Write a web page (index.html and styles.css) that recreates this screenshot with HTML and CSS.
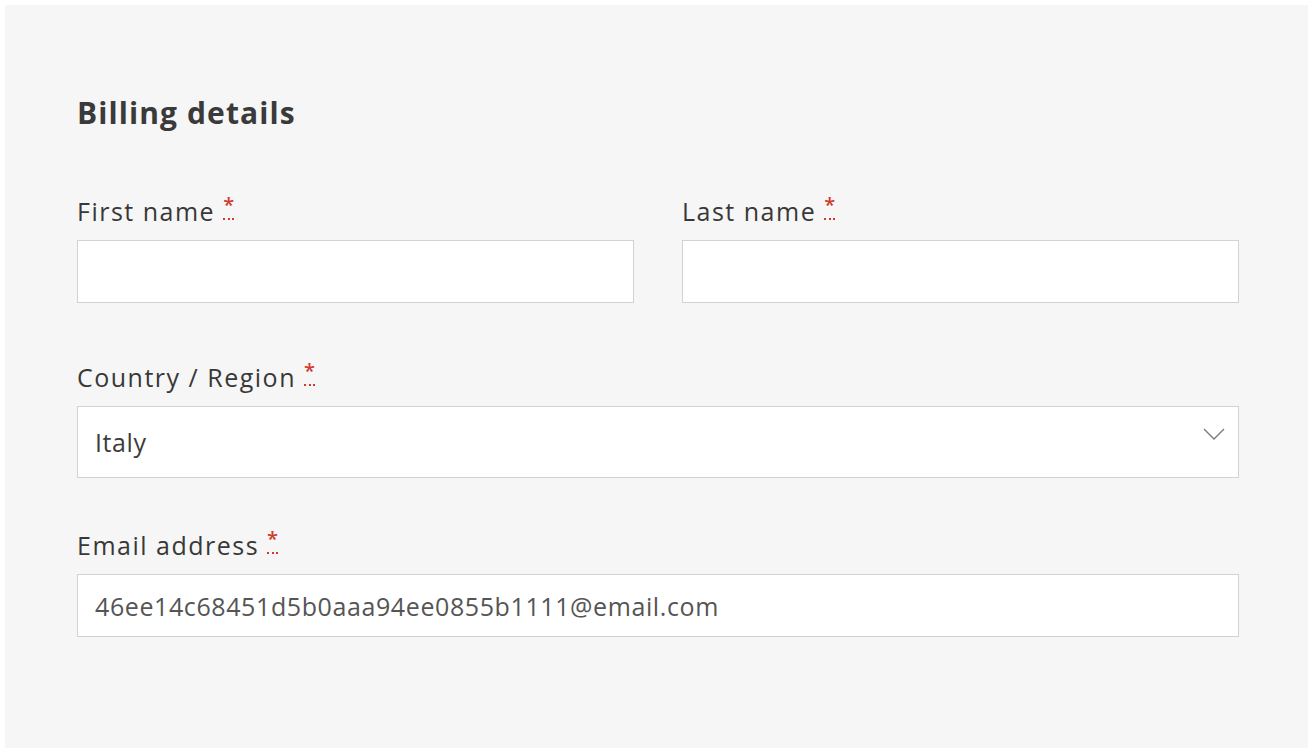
FILE: index.html
```html
<!DOCTYPE html>
<html>
	<head>
		<meta charset="utf-8">
		<title>Billing details</title>
		<link rel="stylesheet" href="styles.css">
	</head>
	<body>
		<div class="panel">
			<h3 class="title">Billing details</h3>
			<div class="row two">
				<div class="field">
					<label>First name <abbr class="req">*</abbr></label>
					<div class="input"></div>
				</div>
				<div class="field">
					<label>Last name <abbr class="req">*</abbr></label>
					<div class="input"></div>
				</div>
			</div>
			<div class="field">
				<label>Country / Region <abbr class="req">*</abbr></label>
				<div class="input select">
					<span>Italy</span>
					<svg width="22" height="12" viewBox="0 0 22 12"><path d="M1 1l10 10 10-10" fill="none" stroke="#777" stroke-width="1.3"/></svg>
				</div>
			</div>
			<div class="field">
				<label>Email address <abbr class="req">*</abbr></label>
				<div class="input"><span>46ee14c68451d5b0aaa94ee0855b1111@email.com</span></div>
			</div>
		</div>
	</body>
</html>
```
FILE: styles.css
```css
*{margin:0;padding:0;box-sizing:border-box}
body{background:#fff;font-family:"Open Sans",Lato,sans-serif;color:#3c3c3c}
.panel{
	margin:5px 0 0 5px;
	background:#f6f6f6;
	min-height:743px;
	padding:88px 69px 40px 72px;
}
.title{
	font-size:30px;
	font-weight:700;
	color:#3a3a3a;
	line-height:40px;
	letter-spacing:1.1px;
	margin-bottom:62px;
}
.row.two{display:grid;grid-template-columns:1fr 1fr;gap:48px;margin-bottom:7px}
.field{margin-bottom:51px}
.field label{
	display:block;
	font-size:25px;
	line-height:32px;
	letter-spacing:1.5px;
	margin-bottom:13px;
	color:#383838;
}
.req{
	display:inline-block;
	font-size:20px;
	line-height:14px;
	vertical-align:9px;
	letter-spacing:0;
	color:#cf3b2b;
	text-decoration:none;
	border-bottom:2px dotted #cf3b2b;
	padding-bottom:6px;
	font-weight:600;
}
.input{
	height:63px;
	background:#fff;
	border:1px solid #d2d2d2;
	display:flex;
	align-items:center;
	padding:0 17px;
	font-size:25px;
	letter-spacing:0.6px;
	color:#555;
}
.select{height:72px;justify-content:space-between;padding-right:13px;color:#3c3c3c}
.select svg{align-self:flex-start;margin-top:21px}
```
